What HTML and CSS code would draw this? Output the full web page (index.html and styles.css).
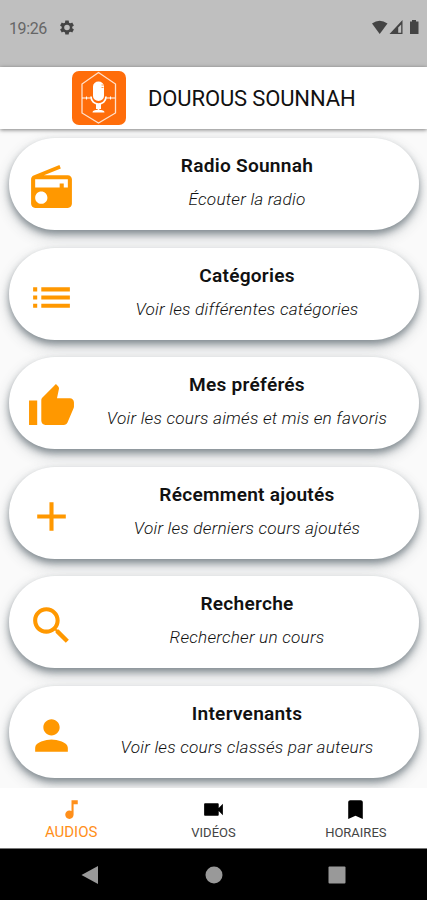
FILE: index.html
```html
<!DOCTYPE html>
<html lang="fr">
<head>
    <meta charset="UTF-8">
    <meta name="viewport" content="width=device-width, initial-scale=1.0">
    <title>Dourous Sounnah</title>
    <link rel="stylesheet" href="styles.css">
</head>
<body>
    <div class="status-bar">
        <span class="time">19:26</span>
        <svg class="gear" viewBox="2 2 20 20"><path fill-rule="evenodd" d="M19.430 12.980c.04-.32.07-.64.07-.98s-.03-.66-.07-.98l2.110-1.650c.19-.15.24-.42.12-.64l-2-3.460c-.12-.22-.39-.3-.61-.22l-2.490 1c-.52-.4-1.080-.73-1.690-.98l-.38-2.650C14.460 2.180 14.250 2 14 2h-4c-.25 0-.46.18-.49.42l-.38 2.650c-.61.25-1.170.59-1.690.98l-2.490-1c-.23-.09-.49 0-.61.22l-2 3.460c-.13.22-.07.49.12.64l2.110 1.650c-.04.32-.07.65-.07.98s.03.66.07.98l-2.110 1.650c-.19.15-.24.42-.12.64l2 3.460c.12.22.39.3.61.22l2.490-1c.52.4 1.080.73 1.690.98l.38 2.650c.03.24.24.42.49.42h4c.25 0 .46-.18.49-.42l.38-2.650c.61-.25 1.170-.59 1.690-.98l2.490 1c.23.09.49 0 .61-.22l2-3.460c.12-.22.07-.49-.12-.64l-2.110-1.650zM12 16a4 4 0 1 1 0-8 4 4 0 0 1 0 8z"/></svg>
        <svg class="signals" viewBox="0 0 49 16">
            <path d="M1 3.600Q8.500 -2 16.500 3.600L8.700 14z"/>
            <path fill-rule="evenodd" d="M31.500 0v14H18.500zM30.200 4.500L27.200 7.500v5.200h3z"/>
            <path d="M41 0h4v1.500h2.500V14h-8.500V1.500h2z"/>
        </svg>
    </div>

    <header class="app-bar">
        <svg class="logo" viewBox="0 0 54 54">
            <rect width="54" height="54" rx="7" fill="#ff6d0a"/>
            <g fill="none" stroke="#fff">
                <path stroke="#ffe1cc" stroke-width="1.300" d="M26.500 1.500L43.500 13v29L26.500 52 10 42V13z"/>
                <path stroke-width="1.100" d="M10 27h9M34 27h9M14.500 25.500v3M38.500 25.500v3"/>
                <path stroke-width="1.700" d="M19 25.500c0 10 15 10 15 0M26.500 33v7"/>
            </g>
            <path fill="#fff" d="M21 15.500a5.500 5 0 0 1 11 0v9.500a5.500 5 0 0 1-11 0zM24 33h5v5h-5zM20.500 41.500c0-2 2-2.500 6-2.500s6 .5 6 2.500z"/>
            <path stroke="#ff6d0a" stroke-width=".7" d="M29.500 14h2M29.500 16.500h2"/>
        </svg>
        <h1>DOUROUS SOUNNAH</h1>
    </header>

    <main class="menu">
        <a class="card">
            <svg viewBox="0 0 24 24"><path d="M3.240 6.150C2.510 6.430 2 7.170 2 8v12c0 1.100.89 2 2 2h16c1.110 0 2-.9 2-2V8c0-1.110-.89-2-2-2H8.300l8.260-3.340L15.880 1 3.240 6.150zM7 20c-1.660 0-3-1.340-3-3s1.340-3 3-3 3 1.340 3 3-1.340 3-3 3zm13-8h-2v-2h-2v2H4V8h16v4z"/></svg>
            <div class="card-text">
                <h2>Radio Sounnah</h2>
                <p>Écouter la radio</p>
            </div>
        </a>
        <a class="card">
            <svg viewBox="0 0 24 24"><path d="M3 13h2v-2H3v2zm0 4h2v-2H3v2zm0-8h2V7H3v2zm4 4h14v-2H7v2zm0 4h14v-2H7v2zM7 7v2h14V7H7z"/></svg>
            <div class="card-text">
                <h2>Catégories</h2>
                <p>Voir les différentes catégories</p>
            </div>
        </a>
        <a class="card">
            <svg viewBox="0 0 24 24"><path d="M1 21h4V9H1v12zm22-11c0-1.100-.9-2-2-2h-6.310l.95-4.570.03-.32c0-.41-.17-.79-.44-1.060L14.170 1 7.590 7.590C7.220 7.950 7 8.450 7 9v10c0 1.100.9 2 2 2h9c.83 0 1.540-.5 1.840-1.220l3.020-7.050c.09-.23.14-.47.14-.73v-2z"/></svg>
            <div class="card-text">
                <h2>Mes préférés</h2>
                <p>Voir les cours aimés et mis en favoris</p>
            </div>
        </a>
        <a class="card">
            <svg viewBox="0 0 24 24"><path d="M19 13h-6v6h-2v-6H5v-2h6V5h2v6h6v2z"/></svg>
            <div class="card-text">
                <h2>Récemment ajoutés</h2>
                <p>Voir les derniers cours ajoutés</p>
            </div>
        </a>
        <a class="card">
            <svg viewBox="0 0 24 24"><path d="M15.500 14h-.79l-.28-.27C15.410 12.590 16 11.110 16 9.500 16 5.910 13.090 3 9.500 3S3 5.910 3 9.500 5.910 16 9.500 16c1.610 0 3.090-.59 4.230-1.570l.27.28v.79l5 4.990L20.490 19l-4.990-5zm-6 0C7.010 14 5 11.990 5 9.500S7.010 5 9.500 5 14 7.010 14 9.500 11.990 14 9.500 14z"/></svg>
            <div class="card-text">
                <h2>Recherche</h2>
                <p>Rechercher un cours</p>
            </div>
        </a>
        <a class="card">
            <svg viewBox="0 0 24 24"><path d="M12 12c2.210 0 4-1.790 4-4s-1.790-4-4-4-4 1.790-4 4 1.790 4 4 4zm0 2c-2.670 0-8 1.340-8 4v2h16v-2c0-2.660-5.330-4-8-4z"/></svg>
            <div class="card-text">
                <h2>Intervenants</h2>
                <p>Voir les cours classés par auteurs</p>
            </div>
        </a>
    </main>

    <nav class="tabs">
        <a class="tab active">
            <svg viewBox="0 0 24 24"><path d="M12 3v10.550c-.59-.34-1.270-.55-2-.55-2.210 0-4 1.790-4 4s1.790 4 4 4 4-1.790 4-4V7h4V3h-6z"/></svg>
            <span>AUDIOS</span>
        </a>
        <a class="tab">
            <svg viewBox="0 0 24 24"><path d="M17 10.500V7c0-.55-.45-1-1-1H4c-.55 0-1 .45-1 1v10c0 .55.45 1 1 1h12c.55 0 1-.45 1-1v-3.500l4 4v-11l-4 4z"/></svg>
            <span>VIDÉOS</span>
        </a>
        <a class="tab">
            <svg viewBox="0 0 24 24"><path d="M17 3H7c-1.100 0-1.990.9-1.990 2L5 21l7-3 7 3V5c0-1.100-.9-2-2-2z"/></svg>
            <span>HORAIRES</span>
        </a>
    </nav>

    <div class="system-nav">
        <svg viewBox="0 0 20 20"><path d="M17 1v18L.5 10z"/></svg>
        <svg viewBox="0 0 20 20"><circle cx="10" cy="10" r="8.500"/></svg>
        <svg viewBox="0 0 20 20"><rect x="1.500" y="1.500" width="17" height="17" rx="1"/></svg>
    </div>
</body>
</html>
```
FILE: styles.css
```css
* {
    box-sizing: border-box;
}
body {
    margin: 0;
    height: 900px;
    display: flex;
    flex-direction: column;
    overflow: hidden;
    font-family: Roboto, sans-serif;
    background: #fafafa;
    color: #111;
}
h1, h2, p {
    margin: 0;
}
svg {
    display: block;
    fill: currentColor;
}
.status-bar {
    height: 67px;
    flex: none;
    display: flex;
    align-items: flex-start;
    padding: 19px 7px 0 9px;
    background: #bfbfbf;
    color: #444;
}
.time {
    width: 51px;
    font-size: 16px;
    line-height: 19px;
    letter-spacing: -0.4px;
    color: #666;
}
.gear {
    width: 14px;
    height: 15px;
    margin-top: 1px;
}
.signals {
    width: 49px;
    height: 16px;
    margin: 1px 0 0 auto;
}
.app-bar {
    height: 62px;
    flex: none;
    display: flex;
    align-items: center;
    padding-left: 72px;
    background: #fff;
    box-shadow: 0 1px 4px rgba(0, 0, 0, 0.5);
    z-index: 1;
}
.logo {
    width: 54px;
    height: 54px;
}
h1 {
    margin-left: 22px;
    font-size: 22px;
    font-weight: 400;
    letter-spacing: -0.13px;
    white-space: nowrap;
}
.menu {
    flex: 1;
    min-height: 0;
    overflow: hidden;
    display: flex;
    flex-direction: column;
    gap: 17.5px;
    padding: 9px 8.5px 0 9px;
}
.card {
    height: 92px;
    flex: none;
    display: flex;
    padding-left: 17.5px;
    border-radius: 46px;
    background: #fff;
    box-shadow: 0 4px 6px rgba(55, 71, 79, 0.45), 0 6px 14px rgba(55, 71, 79, 0.3);
}
.card svg {
    width: 49px;
    height: 49px;
    margin-top: 25px;
    color: #ff9800;
}
.card-text {
    flex: 1;
    padding-top: 16px;
    text-align: center;
    white-space: nowrap;
}
h2 {
    font-size: 19.1px;
    line-height: 24px;
    font-weight: 600;
    letter-spacing: 0.25px;
}
p {
    margin-top: 10px;
    font-size: 17.2px;
    line-height: 22px;
    font-weight: 300;
    font-style: italic;
    letter-spacing: 0.21px;
}
.tabs {
    height: 60px;
    flex: none;
    display: flex;
    background: #fff;
}
.tab {
    flex: 1;
    display: flex;
    flex-direction: column;
    align-items: center;
    padding-top: 9px;
    font-size: 13px;
    line-height: 18px;
    color: #000;
}
.tab svg {
    width: 25px;
    height: 25px;
}
.tab span {
    margin-top: 2px;
    color: #444;
}
.tab.active {
    font-size: 15px;
}
.tab.active span {
    margin-top: 1px;
}
.tab.active, .tab.active span {
    color: #ff8f1a;
}
.system-nav {
    height: 52px;
    flex: none;
    display: flex;
    align-items: center;
    justify-content: center;
    gap: 103px;
    border-top: 1px solid #777;
    background: #000;
    color: #999;
}
.system-nav svg {
    width: 20px;
    height: 20px;
}
```
